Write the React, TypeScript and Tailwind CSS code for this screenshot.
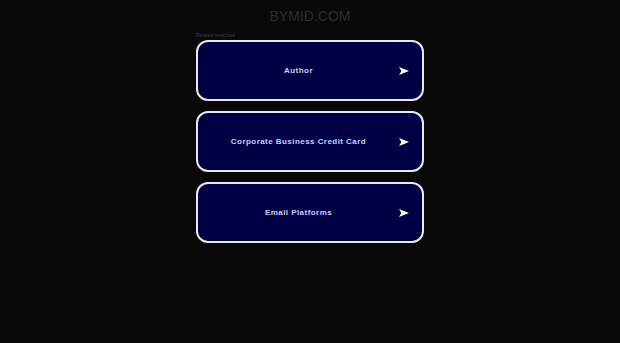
import React from 'react';

const items = ['Author', 'Corporate Business Credit Card', 'Email Platforms'];

const Arrow: React.FC = () => (
  <svg width="10" height="8" viewBox="0 0 10 8" className="shrink-0">
    <polygon points="0,0 10,4 0,8 2.4,4" fill="#ffffff" />
  </svg>
);

const App: React.FC = () => {
  return (
    <div className="min-h-[343px] w-full bg-[#090909] font-['Liberation_Sans',Arial,sans-serif]">
      <div className="pt-[9px] text-center text-[14px] leading-[14px] tracking-[0px] text-[#2c2c2c]">
        BYMID.COM
      </div>
      <div className="mx-auto w-[228px] pt-[9px]">
        <div className="text-[5px] leading-[6px] text-[#3c3c3c]">Related searches</div>
        <div className="mt-[2px] flex flex-col gap-[10px]">
          {items.map((item) => (
            <div
              key={item}
              className="flex h-[61px] items-center rounded-[12px] border-2 border-[#e8e8f0] bg-[#000044] pr-[13px]"
            >
              <span className="flex-1 text-center text-[8px] font-bold tracking-[0.45px] text-[#c9cdff]">
                {item}
              </span>
              <Arrow />
            </div>
          ))}
        </div>
      </div>
    </div>
  );
};

export default App;
